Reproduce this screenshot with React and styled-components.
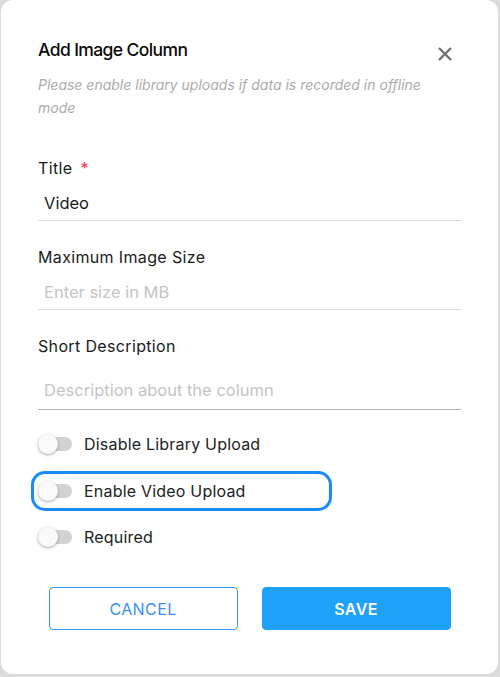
import React from "react";
import styled, { createGlobalStyle } from "styled-components";

const Global = createGlobalStyle`
  html, body { margin: 0; padding: 0; background: #dcdcdc; }
  body { font-family: Inter, "Noto Sans", sans-serif; }
  * { box-sizing: border-box; }
`;

const Card = styled.div`
  margin: 0 2px 0 1px;
  height: 674px;
  background: #fff;
  border-radius: 12px;
  padding: 39px 37px 0 37px;
  display: flex;
  flex-direction: column;
`;

const Header = styled.div`
  display: flex;
  justify-content: space-between;
  align-items: flex-start;
`;

const Heading = styled.h2`
  margin: 0;
  font-size: 17.5px;
  letter-spacing: -0.6px;
  line-height: 22px;
  font-weight: 500;
  color: #0a0a0a;
`;

const CloseButton = styled.button`
  width: 24px;
  height: 24px;
  margin: 3px 4px 0 0;
  padding: 0;
  border: none;
  background: transparent;
  display: flex;
  align-items: center;
  justify-content: center;
  cursor: pointer;
`;

const Subtitle = styled.p`
  margin: 7px 0 0 0;
  font-size: 14px;
  line-height: 23px;
  font-style: italic;
  color: #ababab;
  padding-right: 20px;
`;

const Field = styled.div`
  display: flex;
  flex-direction: column;
  margin-top: ${(p) => p.$top}px;
`;

const Label = styled.label`
  font-size: 16px;
  letter-spacing: 0.35px;
  line-height: 20px;
  color: #1a1a1a;
`;

const Star = styled.span`
  color: #f5304a;
  margin-left: 8px;
`;

const Input = styled.input`
  margin-top: 6px;
  border: none;
  border-bottom: 1px solid ${(p) => (p.$dark ? "#b0b0b0" : "#dadada")};
  outline: none;
  font-family: inherit;
  font-size: 16.5px;
  line-height: 20px;
  color: #1a1a1a;
  padding: ${(p) => (p.$tall ? "18px 6px 9px" : "9px 6px 7px")};
  background: transparent;
  &::placeholder { color: #c4c4c4; }
`;

const Toggles = styled.div`
  display: flex;
  flex-direction: column;
  gap: 6.5px;
  margin-top: 14px;
  margin-left: -7px;
`;

const ToggleRow = styled.div`
  width: 301px;
  height: 40px;
  display: flex;
  align-items: center;
  padding-left: 4px;
  border: 3px solid ${(p) => (p.$focused ? "#1a8af5" : "transparent")};
  border-radius: 14px;
`;

const Track = styled.span`
  position: relative;
  width: 34px;
  height: 14px;
  border-radius: 7px;
  background: #d2d2d2;
  flex: none;
`;

const Thumb = styled.span`
  position: absolute;
  left: 0;
  top: -3px;
  width: 20px;
  height: 20px;
  border-radius: 50%;
  background: #fafafa;
  box-shadow: 0 1px 3px rgba(0, 0, 0, 0.35);
`;

const ToggleLabel = styled.span`
  margin-left: 12px;
  font-size: 16px;
  letter-spacing: 0.2px;
  color: #222;
`;

const Buttons = styled.div`
  display: flex;
  justify-content: center;
  gap: 24px;
  margin-top: 30px;
`;

const Button = styled.button`
  width: 189px;
  height: 43px;
  border-radius: 4px;
  font-family: inherit;
  font-size: 16px;
  letter-spacing: 0.4px;
  cursor: pointer;
  border: 1px solid ${(p) => (p.$primary ? "#1da1f9" : "#2f97ee")};
  background: ${(p) => (p.$primary ? "#1da1f9" : "#fff")};
  color: ${(p) => (p.$primary ? "#fff" : "#3a8ff3")};
  font-weight: ${(p) => (p.$primary ? 600 : 400)};
`;

function Toggle({ label, focused }) {
  return (
    <ToggleRow $focused={focused}>
      <Track>
        <Thumb />
      </Track>
      <ToggleLabel>{label}</ToggleLabel>
    </ToggleRow>
  );
}

export default function App() {
  return (
    <>
      <Global />
      <Card>
        <Header>
          <Heading>Add Image Column</Heading>
          <CloseButton aria-label="close">
            <svg width="16" height="16" viewBox="0 0 16 16">
              <path d="M2 2 L14 14 M14 2 L2 14" stroke="#707070" strokeWidth="2.4" strokeLinecap="butt" />
            </svg>
          </CloseButton>
        </Header>
        <Subtitle>Please enable library uploads if data is recorded in offline mode</Subtitle>
        <Field $top={39}>
          <Label>
            Title<Star>*</Star>
          </Label>
          <Input defaultValue="Video" />
        </Field>
        <Field $top={26}>
          <Label>Maximum Image Size</Label>
          <Input placeholder="Enter size in MB" />
        </Field>
        <Field $top={26}>
          <Label>Short Description</Label>
          <Input $tall $dark placeholder="Description about the column" />
        </Field>
        <Toggles>
          <Toggle label="Disable Library Upload" />
          <Toggle label="Enable Video Upload" focused />
          <Toggle label="Required" />
        </Toggles>
        <Buttons>
          <Button>CANCEL</Button>
          <Button $primary>SAVE</Button>
        </Buttons>
      </Card>
    </>
  );
}
